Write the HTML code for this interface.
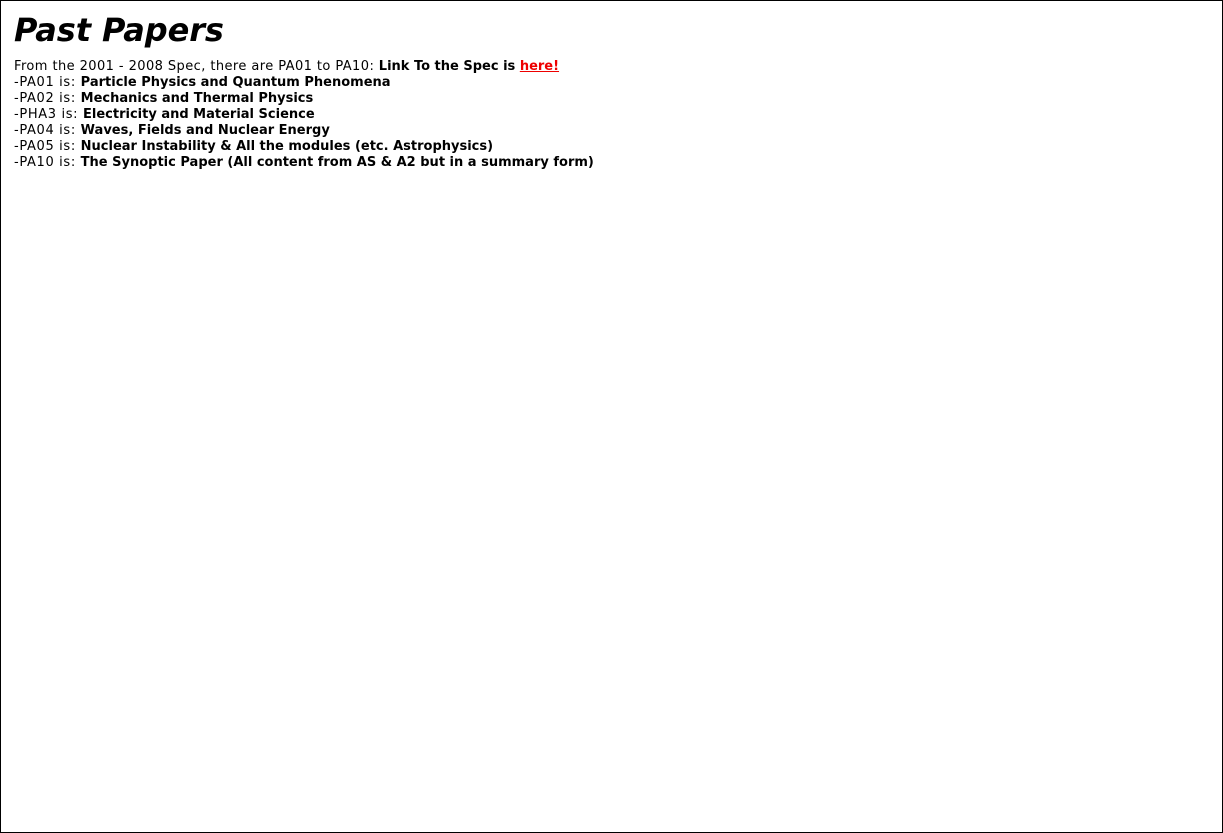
<!DOCTYPE html>
<html><head><style>
html,body{margin:0;padding:0;background:#fff;}
body{width:1221px;height:831px;border:1px solid #000;font-family:"DejaVu Sans","Liberation Sans",sans-serif;font-size:13px;line-height:16px;color:#000;position:relative;overflow:hidden;}
h1{position:absolute;left:13px;top:10px;margin:0;font-size:32px;line-height:38px;font-style:italic;font-weight:bold;letter-spacing:-0.1px;}
.t{position:absolute;left:13px;top:58px;white-space:nowrap;letter-spacing:0.65px;}
.f{letter-spacing:0.42px;}
b{letter-spacing:0;}
a{color:#e00;font-weight:bold;text-decoration:underline;}
</style></head><body>
<h1>Past Papers</h1>
<div class="t"><span class="f">From the 2001 - 2008 Spec, there are PA01 to PA10: </span><b>Link To the Spec is <a>here!</a></b><br>
-PA01 is: <b>Particle Physics and Quantum Phenomena</b><br>
-PA02 is: <b>Mechanics and Thermal Physics</b><br>
-PHA3 is: <b>Electricity and Material Science</b><br>
-PA04 is: <b>Waves, Fields and Nuclear Energy</b><br>
-PA05 is: <b>Nuclear Instability &amp; All the modules (etc. Astrophysics)</b><br>
-PA10 is: <b>The Synoptic Paper (All content from AS &amp; A2 but in a summary form)</b></div>
</body></html>
